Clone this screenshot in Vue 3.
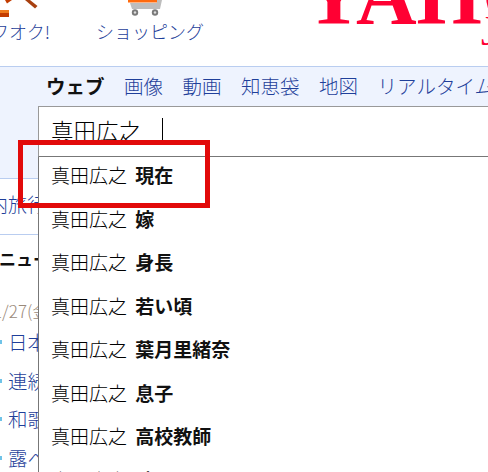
<script setup>
const navItems = ['画像', '動画', '知恵袋', '地図', 'リアルタイム検索']
const suggestions = ['現在', '嫁', '身長', '若い頃', '葉月里緒奈', '息子', '高校教師', '映画']
const newsItems = ['日本', '連続', '和歌', '露へ']
</script>

<template>
  <div class="page">
    <header class="top">
      <div class="service auction">
        <svg class="icon" width="40" height="17" viewBox="0 0 40 17">
          <path d="M5 0 H12 L7 3.5 Z" fill="#c33c00" />
          <path d="M25 0 H30 L37.5 6 L35 8.5 Z" fill="#a8400f" />
          <rect x="0" y="10" width="9" height="3" fill="#ee7a1c" />
          <rect x="0" y="13" width="9" height="4" fill="#c33c00" />
        </svg>
        <span>ヤフオク!</span>
      </div>
      <div class="service shopping">
        <svg class="icon" width="36" height="17" viewBox="0 0 36 17">
          <path d="M28 0 H34 L32 9 H4 L2 3 H29 Z" fill="#bdbdbd" />
          <rect x="0" y="0" width="29" height="2.5" fill="#ff6a0d" />
          <circle cx="7" cy="12.5" r="3.2" fill="#7b7b7b" />
          <circle cx="7" cy="12.5" r="1.2" fill="#ddd" />
          <circle cx="27" cy="12.5" r="3.2" fill="#7b7b7b" />
          <circle cx="27" cy="12.5" r="1.2" fill="#ddd" />
        </svg>
        <span>ショッピング</span>
      </div>
      <div class="logo">
        <span class="logo-main">YAHOO!</span>
        <span class="logo-sub">JAPAN</span>
      </div>
    </header>

    <section class="band">
      <nav class="nav">
        <b>ウェブ</b>
        <a v-for="item in navItems" :key="item">{{ item }}</a>
      </nav>
    </section>

    <aside class="side">
      <div class="travel">内旅行</div>
      <div class="side-title">ニュース</div>
      <div class="date">1/27(金)</div>
      <ul class="news">
        <li v-for="item in newsItems" :key="item">{{ item }}</li>
      </ul>
    </aside>

    <div class="search">
      <div class="search-input">
        <span>真田広之</span><i class="caret"></i>
      </div>
      <ul class="list">
        <li v-for="s in suggestions" :key="s">真田広之 <b>{{ s }}</b></li>
      </ul>
    </div>

    <div class="marker"></div>
  </div>
</template>

<style scoped>
.page {
  position: relative;
  width: 488px;
  height: 472px;
  overflow: hidden;
  background: #fff;
  font-family: "Noto Sans CJK JP", "Noto Sans", sans-serif;
  font-weight: 300;
}
.top {
  height: 66px;
  display: flex;
  position: relative;
  overflow: hidden;
  box-sizing: border-box;
}
.service {
  display: flex;
  flex-direction: column;
  color: #1f3f9a;
  font-size: 18px;
  line-height: 24px;
  white-space: nowrap;
}
.auction {
  width: 50px;
  flex: none;
  align-items: flex-end;
}
.auction .icon {
  align-self: flex-start;
}
.auction span {
  direction: rtl;
  unicode-bidi: plaintext;
}
.shopping {
  margin-left: 46px;
}
.shopping .icon {
  margin-left: 32px;
}
.icon {
  display: block;
  margin-bottom: 2px;
}
.logo {
  position: absolute;
  left: 303px;
  top: -46px;
  color: #ff0033;
  font-family: "Liberation Serif", serif;
  font-weight: 700;
}
.logo-main {
  display: block;
  font-size: 84px;
  line-height: 84px;
  white-space: nowrap;
}
.logo-sub {
  position: absolute;
  left: 178px;
  top: 56px;
  font-size: 42px;
  line-height: 42px;
  font-weight: 400;
}
.band {
  height: 113px;
  box-sizing: border-box;
  background: #eef3fe;
  border-top: 1px solid #b9cdf0;
  border-bottom: 1px solid #b9cdf0;
}
.nav {
  display: flex;
  gap: 19.5px;
  padding: 3px 0 0 46px;
  font-size: 19.5px;
  line-height: 32px;
  white-space: nowrap;
  color: #1f3f9a;
}
.nav b {
  color: #111;
  font-weight: 700;
}
.side {
  width: 38px;
  overflow: hidden;
  white-space: nowrap;
}
.travel {
  height: 56px;
  margin-left: -11px;
  box-sizing: border-box;
  border-bottom: 1px solid #b9cdf0;
  font-size: 19px;
  line-height: 50px;
  color: #1f3f9a;
}
.side-title {
  font-size: 17px;
  font-weight: 700;
  line-height: 48px;
  color: #111;
  margin-left: -1px;
}
.date {
  font-size: 17px;
  line-height: 20px;
  color: #9a8a7a;
  margin: 18px 0 0 -7px;
}
.news {
  list-style: none;
  margin: 2px 0 0;
  padding: 0 0 0 8px;
  font-size: 19.5px;
  line-height: 38.5px;
  color: #1f3f9a;
}
.news li {
  position: relative;
}
.news li::before {
  content: "";
  position: absolute;
  left: -8px;
  top: 17px;
  width: 2px;
  height: 4px;
  background: #6fc3e8;
}
.search {
  position: absolute;
  left: 38px;
  top: 106px;
  width: 460px;
}
.search-input {
  position: relative;
  z-index: 1;
  height: 51px;
  box-sizing: border-box;
  display: flex;
  align-items: center;
  gap: 21px;
  padding: 0 0 3px 12px;
  background: #fff;
  border: 1px solid #999;
  border-bottom-color: #777;
  border-right: 0;
  font-size: 22.5px;
  color: #000;
}
.caret {
  width: 1px;
  height: 25px;
  background: #000;
}
.list {
  list-style: none;
  margin: -4px 0 0;
  padding: 0 0 0 12px;
  border-left: 1px solid #777;
  font-size: 19px;
  line-height: 43.5px;
  word-spacing: 4px;
  color: #000;
  white-space: nowrap;
  background: #fff;
}
.list b {
  color: #111;
  font-weight: 700;
}
.marker {
  position: absolute;
  z-index: 2;
  left: 18px;
  top: 140px;
  width: 192px;
  height: 68px;
  box-sizing: border-box;
  border: 5px solid #e20a0a;
}
</style>
